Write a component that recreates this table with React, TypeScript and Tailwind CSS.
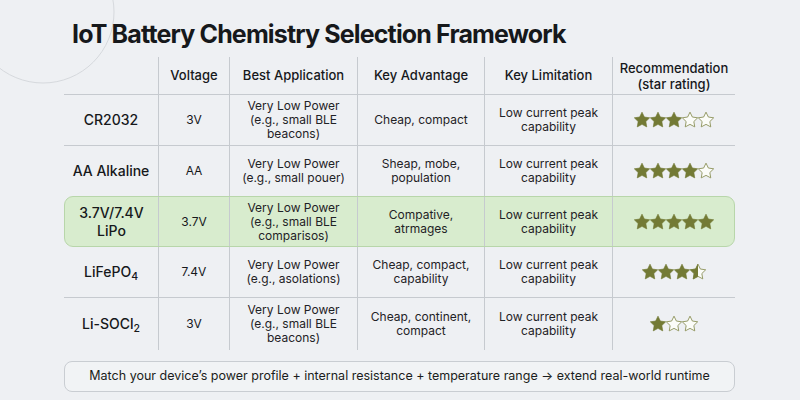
import React from 'react'

type Row = {
  name: React.ReactNode
  voltage: string
  app: string[]
  adv: string[]
  stars: number[] // 1 = full, 0.5 = half, 0 = empty
  highlight?: boolean
  height: string
  border?: boolean
}

const cols = 'grid grid-cols-[94px_71px_128px_127px_128px_1fr]'
const colsHl = 'grid grid-cols-[93px_71px_128px_127px_128px_1fr]'

const rows: Row[] = [
  {
    name: 'CR2032',
    voltage: '3V',
    app: ['Very Low Power', '(e.g., small BLE', 'beacons)'],
    adv: ['Cheap, compact'],
    stars: [1, 1, 1, 0, 0],
    height: 'h-[51px]',
    border: true,
  },
  {
    name: 'AA Alkaline',
    voltage: 'AA',
    app: ['Very Low Power', '(e.g., small pouer)'],
    adv: ['Sheap, mobe,', 'population'],
    stars: [1, 1, 1, 1, 0],
    height: 'h-[50px]',
  },
  {
    name: (
      <>
        3.7V/7.4V
        <br />
        LiPo
      </>
    ),
    voltage: '3.7V',
    app: ['Very Low Power', '(e.g., small BLE', 'comparisos)'],
    adv: ['Compative,', 'atrmages'],
    stars: [1, 1, 1, 1, 1],
    highlight: true,
    height: 'h-[51px]',
  },
  {
    name: (
      <>
        LiFePO<sub>4</sub>
      </>
    ),
    voltage: '7.4V',
    app: ['Very Low Power', '(e.g., asolations)'],
    adv: ['Cheap, compact,', 'capability'],
    stars: [1, 1, 1, 0.5],
    height: 'h-[51px]',
    border: true,
  },
  {
    name: (
      <>
        Li-SOCl<sub>2</sub>
      </>
    ),
    voltage: '3V',
    app: ['Very Low Power', '(e.g., small BLE', 'beacons)'],
    adv: ['Cheap, continent,', 'compact'],
    stars: [1, 0, 0],
    height: 'h-[52px]',
  },
]

const STAR =
  'M12 2.2l2.95 6.1 6.65.95-4.8 4.7 1.15 6.65L12 17.45 6.05 20.6l1.15-6.65-4.8-4.7 6.65-.95L12 2.2z'

function Star({ value, id }: { value: number; id: string }) {
  return (
    <svg width="16" height="16" viewBox="2 2 20 20" className="shrink-0">
      <defs>
        <clipPath id={id}>
          <rect x="0" y="0" width="12" height="24" />
        </clipPath>
      </defs>
      {value === 1 ? (
        <path d={STAR} fill="#737a35" stroke="#737a35" strokeWidth="0.8" strokeLinejoin="round" />
      ) : (
        <>
          <path d={STAR} fill="#fbfcf8" stroke="#8a8f55" strokeWidth="1.1" strokeLinejoin="round" />
          {value === 0.5 && (
            <path d={STAR} fill="#737a35" stroke="#737a35" strokeWidth="0.8" clipPath={`url(#${id})`} />
          )}
        </>
      )}
    </svg>
  )
}

function Stars({ values, rowKey }: { values: number[]; rowKey: number }) {
  return (
    <div className="flex items-center">
      {values.map((v, i) => (
        <Star key={i} value={v} id={`half-${rowKey}-${i}`} />
      ))}
    </div>
  )
}

function Lines({ lines }: { lines: string[] }) {
  return (
    <div className="text-center text-[12px] leading-[14px] text-[#1f2226]">
      {lines.map((l, i) => (
        <div key={i}>{l}</div>
      ))}
    </div>
  )
}

const cell = 'flex items-center justify-center border-l border-[#c6cacf]'

export default function App() {
  return (
    <div
      className="relative h-[400px] w-[800px] overflow-hidden bg-[#eef0f3] text-[#16181b]"
      style={{ fontFamily: 'Inter, "Noto Sans", sans-serif' }}
    >
      <svg className="absolute left-0 top-0" width="140" height="100" viewBox="0 0 140 100">
        <circle cx="43" cy="12" r="71" fill="none" stroke="#d6d9dd" strokeWidth="1" />
      </svg>

      <div className="relative ml-[64px] w-[671px] pt-[18px]">
        <h1 className="pl-2 text-[25px] font-bold leading-[32px] tracking-[-0.85px]">
          IoT Battery Chemistry Selection Framework
        </h1>

        <div className="mt-[7px]">
          {/* header */}
          <div className={`${cols} h-[38px] border-b border-[#c6cacf]`}>
            <div />
            {['Voltage', 'Best Application', 'Key Advantage', 'Key Limitation'].map((h) => (
              <div key={h} className={`${cell} text-[13px] font-medium`}>
                {h}
              </div>
            ))}
            <div className={`${cell} text-center text-[13px] font-medium leading-[16px]`}>
              Recommendation
              <br />
              (star rating)
            </div>
          </div>

          {rows.map((r, idx) => (
            <div
              key={idx}
              className={`${r.highlight ? colsHl : cols} ${r.height} ${
                r.highlight
                  ? 'rounded-[9px] border border-[#b8d6aa] bg-[#d8ecce]'
                  : r.border
                    ? 'border-b border-[#c6cacf]'
                    : ''
              }`}
            >
              <div className="flex items-center justify-center text-center text-[14px] font-medium leading-[18px]">
                <span>{r.name}</span>
              </div>
              <div className={`${cell} text-[12px]`}>{r.voltage}</div>
              <div className={cell}>
                <Lines lines={r.app} />
              </div>
              <div className={cell}>
                <Lines lines={r.adv} />
              </div>
              <div className={cell}>
                <Lines lines={['Low current peak', 'capability']} />
              </div>
              <div className={cell}>
                <Stars values={r.stars} rowKey={idx} />
              </div>
            </div>
          ))}
        </div>

        <div className="mt-[11px] flex h-[31px] items-center justify-center rounded-lg border border-[#c9cdd2] bg-[#f1f3f5] text-[12.5px] text-[#1b1d20]">
          Match your device’s power profile + internal resistance + temperature range → extend real-world runtime
        </div>
      </div>
    </div>
  )
}
